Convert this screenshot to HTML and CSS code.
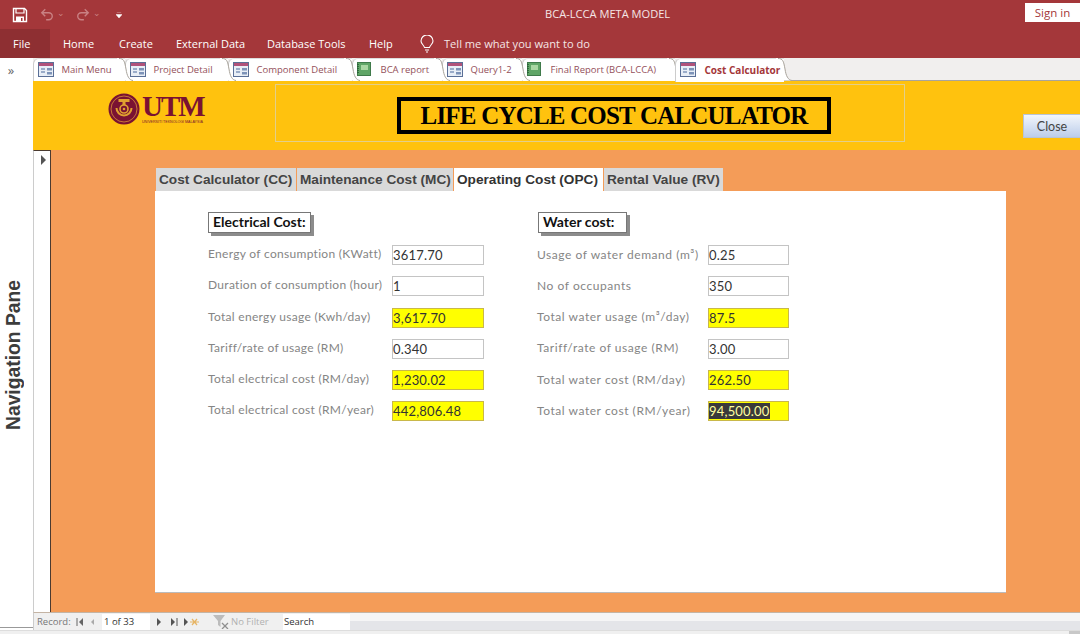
FILE: index.html
```html
<!DOCTYPE html>
<html lang="en">
<head>
    <meta charset="UTF-8">
    <title>BCA-LCCA META MODEL</title>
    <link rel="stylesheet" href="styles.css">
</head>
<body>
    <svg class="defs" width="0" height="0">
        <symbol id="form-icon" viewBox="0 0 16 15">
            <rect x="0.5" y="0.5" width="15" height="14" fill="#e8eef6" stroke="#5a6f96"/>
            <rect x="1" y="1" width="14" height="3" fill="#b0527a"/>
            <path d="M3 7h4M3 10h4" stroke="#4d6a9c" stroke-width="1.2"/>
            <rect x="9" y="6" width="5" height="2.5" fill="#7d93b8"/>
            <rect x="9" y="10" width="5" height="2.5" fill="#7d93b8"/>
        </symbol>
        <symbol id="report-icon" viewBox="0 0 14 14">
            <rect x="0.5" y="0.5" width="13" height="13" fill="#5fa566" stroke="#3f7a4a"/>
            <rect x="4" y="3" width="7" height="5" fill="#a9d6a2"/>
            <path d="M1 2v10" stroke="#245c33" stroke-width="1.5" stroke-dasharray="1 1"/>
        </symbol>
        <symbol id="tab-tail" viewBox="0 0 16 23">
            <path d="M0 0H2C7 0 7.500 3 9 11C10 18 12 22 16 22.500H0z" fill="#fff"/>
            <path d="M2 .5C7 .5 7.500 3 9 11C10 18 12 22 16 22.500" fill="none" stroke="#a9a49c"/>
        </symbol>
    </svg>

    <div class="titlebar">
        <div class="qat">
            <svg width="16" height="16" viewBox="0 0 16 16"><path d="M1.5 1.5h11l2 2v11h-13z" fill="none" stroke="#fff" stroke-width="1.4"/><path d="M4 2v4h8V2" fill="none" stroke="#fff" stroke-width="1.2"/><rect x="4" y="9.5" width="8" height="5" fill="#fff"/><rect x="9" y="11" width="1.5" height="3" fill="#a4373a"/></svg>
            <svg class="undo" width="14" height="13" viewBox="0 0 16 14"><path d="M6 1 2 5l4 4M2 5h8a4 4 0 0 1 0 8H7" fill="none" stroke="#c98183" stroke-width="1.6"/></svg>
            <span class="caret">⌄</span>
            <svg class="redo" width="14" height="13" viewBox="0 0 16 14"><path d="M10 1l4 4-4 4M14 5H6a4 4 0 0 0 0 8h3" fill="none" stroke="#c98183" stroke-width="1.6"/></svg>
            <span class="caret">⌄</span>
            <svg class="more" width="6" height="6" viewBox="0 0 7 7"><path d="M1 0h5M0 3h7l-3.500 4z" fill="#fff" stroke="#fff" stroke-width="0.6"/></svg>
        </div>
        <div class="app-title">BCA-LCCA META MODEL</div>
        <a class="signin">Sign in</a>
    </div>

    <div class="ribbon">
        <span class="file">File</span>
        <span class="menu home">Home</span>
        <span class="menu create">Create</span>
        <span class="menu external">External Data</span>
        <span class="menu database">Database Tools</span>
        <span class="menu help">Help</span>
        <svg class="bulb" width="14" height="18" viewBox="0 0 14 18"><path d="M4.500 12.500C4 10 1 9 1 6a6 6 0 0 1 12 0c0 3-3 4-3.500 6.500zM5 15h4M6 17h2" fill="none" stroke="#fff" stroke-width="1.100"/></svg>
        <span class="tell">Tell me what you want to do</span>
    </div>

    <div class="workspace">
        <aside class="navpane">
            <div class="nav-arrows">»</div>
            <div class="nav-label">Navigation Pane</div>
        </aside>

        <main class="docarea">
            <div class="doctabs">
                <div class="doctab w-main"><svg class="ic"><use href="#form-icon"/></svg>Main Menu<svg class="tail"><use href="#tab-tail"/></svg></div>
                <div class="doctab w-project"><svg class="ic"><use href="#form-icon"/></svg>Project Detail<svg class="tail"><use href="#tab-tail"/></svg></div>
                <div class="doctab w-component"><svg class="ic"><use href="#form-icon"/></svg>Component Detail<svg class="tail"><use href="#tab-tail"/></svg></div>
                <div class="doctab w-bca"><svg class="ic ic-r"><use href="#report-icon"/></svg>BCA report<svg class="tail"><use href="#tab-tail"/></svg></div>
                <div class="doctab w-query"><svg class="ic"><use href="#form-icon"/></svg>Query1-2<svg class="tail"><use href="#tab-tail"/></svg></div>
                <div class="doctab w-final"><svg class="ic ic-r"><use href="#report-icon"/></svg>Final Report (BCA-LCCA)<svg class="tail"><use href="#tab-tail"/></svg></div>
                <div class="doctab w-cost active"><svg class="ic"><use href="#form-icon"/></svg>Cost Calculator<svg class="tail"><use href="#tab-tail"/></svg></div>
            </div>

            <header class="formhead">
                <div class="logo">
                    <svg width="32" height="32" viewBox="0 0 32 32">
                        <circle cx="16" cy="16" r="15.500" fill="#7a1232"/>
                        <circle cx="16" cy="16" r="13" fill="none" stroke="#d9913a" stroke-width="0.800"/>
                        <path d="M8.500 15a7.500 7.500 0 0 0 15 0" fill="none" stroke="#e0a030" stroke-width="2"/>
                        <circle cx="16" cy="16" r="4" fill="none" stroke="#e0a030" stroke-width="1.600"/>
                        <circle cx="16" cy="16" r="1.300" fill="#e0a030"/>
                        <rect x="10.500" y="6" width="11" height="3" fill="#e0a030"/>
                        <rect x="14.500" y="9" width="3" height="3" fill="#e0a030"/>
                    </svg>
                    <div class="logo-text">
                        <div class="utm">UTM</div>
                        <div class="utm-sub">UNIVERSITI TEKNOLOGI MALAYSIA</div>
                    </div>
                </div>
                <div class="titlepanel">
                    <h1>LIFE CYCLE COST CALCULATOR</h1>
                </div>
                <button class="close">Close</button>
            </header>

            <div class="formbody">
                <div class="selector"><span class="sel-arrow"></span></div>
                <div class="detail">
                    <div class="tabs">
                        <div class="tab t-cc">Cost Calculator (CC)</div>
                        <div class="tab t-mc">Maintenance Cost (MC)</div>
                        <div class="tab t-opc selected">Operating Cost (OPC)</div>
                        <div class="tab t-rv">Rental Value (RV)</div>
                    </div>
                    <section class="panel">
                        <div class="col col-elec">
                            <h2 class="heading h-elec">Electrical Cost:</h2>
                            <div class="row"><label>Energy of consumption (KWatt)</label><span class="field">3617.70</span></div>
                            <div class="row"><label>Duration of consumption (hour)</label><span class="field">1</span></div>
                            <div class="row"><label>Total energy usage (Kwh/day)</label><span class="field calc">3,617.70</span></div>
                            <div class="row"><label>Tariff/rate of usage (RM)</label><span class="field">0.340</span></div>
                            <div class="row"><label>Total electrical cost (RM/day)</label><span class="field calc">1,230.02</span></div>
                            <div class="row"><label>Total electrical cost (RM/year)</label><span class="field calc">442,806.48</span></div>
                        </div>
                        <div class="col col-water">
                            <h2 class="heading h-water">Water cost:</h2>
                            <div class="row"><label>Usage of water demand (m³)</label><span class="field">0.25</span></div>
                            <div class="row"><label>No of occupants</label><span class="field">350</span></div>
                            <div class="row"><label>Total water usage (m³/day)</label><span class="field calc">87.5</span></div>
                            <div class="row"><label>Tariff/rate of usage (RM)</label><span class="field">3.00</span></div>
                            <div class="row"><label>Total water cost (RM/day)</label><span class="field calc">262.50</span></div>
                            <div class="row"><label>Total water cost (RM/year)</label><span class="field calc"><mark>94,500.00</mark></span></div>
                        </div>
                    </section>
                </div>
            </div>

            <footer class="recordbar">
                <span class="rec-label">Record:</span>
                <svg class="rec-first" width="22" height="8" viewBox="0 0 22 8"><path d="M1 0v8" stroke="#666"/><path d="M7 0v8L3 4z" fill="#666"/><path d="M18 1v6l-3-3z" fill="#aaa"/></svg>
                <span class="rec-box">1 of 33</span>
                <svg class="rec-next" width="44" height="8" viewBox="0 0 44 8"><path d="M1 0v8l4-4zM15 0v8l4-4zM28 0v8l4-4z" fill="#555"/><path d="M21 0v8" stroke="#555"/><path d="M36 1l5 6M41 1l-5 6M34 4h9" stroke="#e6b566" stroke-width="1.200"/></svg>
                <svg class="rec-filter" width="16" height="14" viewBox="0 0 16 14"><path d="M0 0h12L7.500 6v6L5 10V6z" fill="#bcbcbc"/><path d="M9 8l6 6M15 8l-6 6" stroke="#909090" stroke-width="1.300"/></svg>
                <span class="rec-filter-text">No Filter</span>
                <span class="rec-search">Search</span>
                <div class="scrolltrack"></div>
            </footer>
        </main>
    </div>
    <div class="bottomstrip"><span class="grip"></span></div>
</body>
</html>
```

FILE: styles.css
```css
* {
    box-sizing: border-box;
}

html, body {
    margin: 0;
    height: 634px;
    overflow: hidden;
}

body {
    font-family: "Open Sans", sans-serif;
    background-color: #fff;
    display: flex;
    flex-direction: column;
}

.defs {
    position: absolute;
}

/* title bar */
.titlebar {
    height: 29px;
    flex: none;
    display: flex;
    align-items: center;
    background-color: #a4373a;
    color: #fff;
    position: relative;
}

.qat {
    display: flex;
    align-items: center;
    padding-left: 12px;
}

.undo {
    margin-left: 12px;
}

.redo {
    margin-left: 9px;
}

.caret {
    color: #c98183;
    font-size: 9px;
    margin: -4px 0 0 3px;
    width: 10px;
}

.more {
    margin-left: 13px;
}

.app-title {
    position: absolute;
    left: 545px;
    top: 6px;
    font-size: 11.100px;
    color: #f5e6e6;
}

.signin {
    margin-left: auto;
    margin-top: -5px;
    width: 55px;
    height: 19px;
    background-color: #fff;
    color: #a4373a;
    font-size: 11.500px;
    line-height: 19px;
    text-align: center;
}

/* ribbon tabs */
.ribbon {
    height: 29px;
    flex: none;
    display: flex;
    align-items: center;
    background-color: #a4373a;
    color: #fff;
    font-size: 11px;
}

.file {
    width: 50px;
    height: 29px;
    line-height: 29px;
    padding-left: 13px;
    background-color: #8e2f32;
}

.menu {
    flex: none;
}

.home {
    margin-left: 13px;
    width: 56px;
}

.create {
    width: 57px;
}

.external {
    width: 91px;
}

.database {
    width: 102px;
}

.help {
    width: 51px;
}

.bulb {
    flex: none;
}

.tell {
    margin-left: 10px;
    font-size: 11.100px;
    color: #f5e6e6;
}

/* main area */
.workspace {
    flex: 1;
    display: flex;
    min-height: 0;
}

.navpane {
    width: 33px;
    flex: none;
    position: relative;
    background-color: #fff;
    border-bottom: 1px solid #999;
    margin-bottom: 2px;
}

.nav-arrows {
    text-align: center;
    font-size: 13px;
    line-height: 20px;
    color: #666;
    padding-right: 11px;
    margin-top: 2px;
}

.nav-label {
    writing-mode: vertical-rl;
    transform: rotate(180deg);
    font-family: "Liberation Sans", sans-serif;
    font-weight: bold;
    font-size: 19.300px;
    color: #3c3c3c;
    position: absolute;
    left: 3px;
    top: 222px;
}

.docarea {
    flex: 1;
    min-width: 0;
    display: flex;
    flex-direction: column;
}

/* document tabs */
.doctabs {
    height: 23px;
    flex: none;
    display: flex;
    background-color: #f1efee;
    border-bottom: 1px solid #a9a49c;
}

.doctab {
    position: relative;
    height: 23px;
    flex: none;
    background-color: #fff;
    color: #94505a;
    font-size: 9.500px;
    line-height: 22px;
    padding-left: 27.500px;
    border-left: 1px solid #ccc;
    border-top: 1px solid #ddd;
    border-radius: 6px 0 0 0;
    white-space: nowrap;
}

.tail {
    position: absolute;
    z-index: -1;
    right: -8px;
    top: -1px;
    width: 16px;
    height: 23px;
}

.doctab .ic {
    position: absolute;
    left: 4px;
    top: 3px;
    width: 16px;
    height: 15px;
}

.doctab .ic-r {
    width: 14px;
    height: 14px;
}

.w-main { width: 92px; z-index: 7; }
.w-project { width: 103px; z-index: 6; }
.w-component { width: 124px; z-index: 5; }
.w-bca { width: 90px; z-index: 4; }
.w-query { width: 80px; z-index: 3; }
.w-final { width: 153px; z-index: 2; }
.w-cost { width: 109px; z-index: 8; }

.active {
    font-weight: bold;
    font-size: 10px;
    padding-left: 28.500px;
    color: #a4373a;
    height: 24px;
}

/* form header */
.formhead {
    height: 69px;
    flex: none;
    display: flex;
    background-color: #ffc20e;
    position: relative;
}

.logo {
    width: 242px;
    flex: none;
    display: flex;
    padding: 12px 0 0 75px;
    color: #7a1232;
}

.logo-text {
    margin-left: 2px;
}

.utm {
    font-family: "Liberation Serif", serif;
    font-weight: bold;
    font-size: 29px;
    line-height: 27px;
    letter-spacing: -2px;
}

.utm-sub {
    font-family: "Liberation Sans", sans-serif;
    font-size: 3.600px;
    line-height: 5px;
    white-space: nowrap;
}

.titlepanel {
    width: 630px;
    height: 58px;
    margin-top: 3px;
    flex: none;
    border: 1px solid #e3cf8a;
    padding: 12px 0 0 121px;
}

.titlepanel h1 {
    width: 434px;
    height: 37px;
    margin: 0;
    border: 4px solid #000;
    font-family: "Liberation Serif", serif;
    font-size: 25px;
    line-height: 29px;
    letter-spacing: -0.800px;
    font-weight: bold;
    text-align: center;
    white-space: nowrap;
    color: #000;
}

.close {
    width: 57px;
    height: 24px;
    margin: 33px 0 0 118px;
    padding: 0;
    border: 1px solid #b8c4d8;
    border-right: none;
    background: linear-gradient(#f2f6fc, #bccdea);
    color: #444;
    font-family: Lato, sans-serif;
    font-size: 12.500px;
}

/* form body */
.formbody {
    flex: 1;
    min-height: 0;
    display: flex;
}

.selector {
    width: 18px;
    flex: none;
    background-color: #fff;
    border-left: 1px solid #ccc;
    border-top: 1px solid #4a3a30;
    border-right: 1px solid #4a3a30;
    padding: 4px 0 0 7px;
}

.sel-arrow {
    display: block;
    width: 0;
    height: 0;
    border-left: 5px solid #555;
    border-top: 5px solid transparent;
    border-bottom: 5px solid transparent;
}

.detail {
    flex: 1;
    min-width: 0;
    background-color: #f49c58;
    padding: 18px 0 0 104px;
}

.tabs {
    display: flex;
    height: 23px;
    padding-left: 1px;
    gap: 1px;
}

.tab {
    height: 23px;
    background-color: #d9d9d9;
    color: #444;
    font-family: "Liberation Sans", sans-serif;
    font-weight: bold;
    font-size: 13.650px;
    line-height: 24px;
    padding-left: 3px;
    white-space: nowrap;
}

.selected {
    background-color: #fff;
    color: #333;
}

.t-cc { width: 140px; }
.t-mc { width: 156px; }
.t-opc { width: 149px; }
.t-rv { width: 119px; }

.panel {
    width: 851px;
    height: 402px;
    background-color: #fff;
    border-bottom: 1px solid #bbb;
    display: flex;
    padding-top: 21px;
    font-family: Lato, sans-serif;
}

.col-elec {
    width: 329px;
    margin-left: 53px;
}

.col-water {
    width: 300px;
}

.heading {
    height: 21px;
    margin: 0 0 12px;
    background-color: #fff;
    border: 1px solid #777;
    box-shadow: 3px 3px 0 #8c8c8c;
    color: #111;
    font-size: 14px;
    font-weight: bold;
    line-height: 17px;
    padding-left: 4px;
}

.h-elec {
    width: 103px;
}

.h-water {
    width: 89px;
    margin-left: 1px;
}

.row {
    height: 20px;
    margin-bottom: 11.300px;
    display: flex;
    align-items: center;
}

label {
    color: #858585;
    font-size: 12px;
    white-space: nowrap;
}

.col-elec label {
    width: 184px;
    letter-spacing: 0.300px;
    margin-top: -3px;
}

.col-water label {
    width: 171px;
    letter-spacing: 0.550px;
    margin-top: -2px;
}

.field {
    height: 20px;
    border: 1px solid #c4c4c4;
    color: #333;
    font-size: 13px;
    line-height: 18px;
    letter-spacing: 0.200px;
}

.col-elec .field {
    width: 92px;
}

.col-water .field {
    width: 81px;
}

.calc {
    background-color: #ffff00;
    border-color: #c9b84a;
}

mark {
    background-color: #3a3a3a;
    color: #ffffa0;
}

/* record navigation */
.recordbar {
    height: 18px;
    flex: none;
    display: flex;
    align-items: center;
    background-color: #f0f0f0;
    border-left: 1px solid #ccc;
    border-top: 1px solid #c4b4a4;
    color: #777;
    font-family: "Open Sans", sans-serif;
    font-size: 9.500px;
    padding-left: 3px;
}

.rec-label {
    width: 39px;
}

.rec-first {
    flex: none;
}

.rec-box {
    width: 48px;
    height: 16px;
    margin-left: 4px;
    background-color: #fff;
    color: #333;
    line-height: 16px;
    padding-left: 2px;
}

.rec-next {
    margin-left: 6px;
    flex: none;
}

.rec-filter {
    margin-left: 13px;
    flex: none;
}

.rec-filter-text {
    color: #b0b0b0;
    margin-left: 2px;
    width: 52px;
}

.rec-search {
    width: 67px;
    height: 16px;
    background-color: #fff;
    color: #333;
    line-height: 16px;
    padding-left: 1px;
}

.scrolltrack {
    flex: 1;
    height: 17px;
    background: linear-gradient(#f5f5f6 8px, #e4e5e9 8px);
}

.bottomstrip {
    height: 4px;
    flex: none;
    background-color: #f0f0f0;
    border-top: 1px solid #ddd;
    display: flex;
    justify-content: flex-end;
}

.grip {
    width: 11px;
    background-color: #c8c8c8;
}
```
